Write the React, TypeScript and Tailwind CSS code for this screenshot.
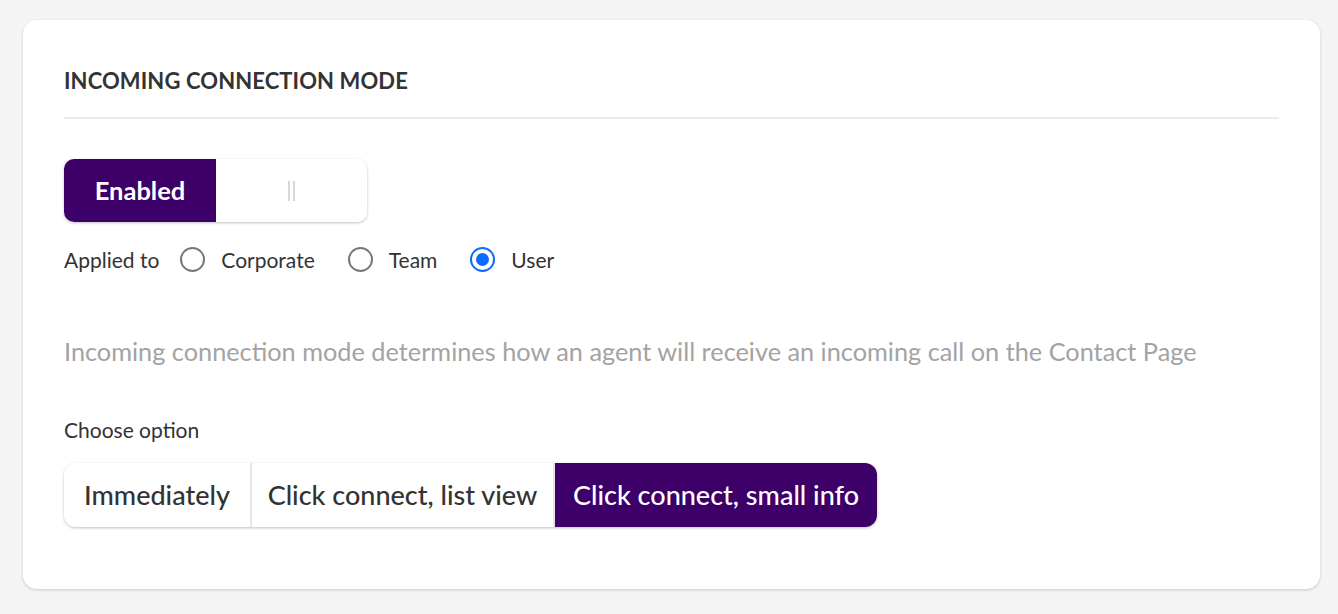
import React, { useState } from "react";

const scopes = ["Corporate", "Team", "User"];
const options = [
  { label: "Immediately", w: "w-[186px]" },
  { label: "Click connect, list view", w: "w-[303px]" },
  { label: "Click connect, small info", w: "w-[324px]" },
];

function Radio({ checked }: { checked: boolean }) {
  return (
    <span
      className={
        "w-[25px] h-[25px] rounded-full border-2 flex items-center justify-center bg-white " +
        (checked ? "border-[#0a6cff]" : "border-[#777]")
      }
    >
      {checked && <span className="w-[13px] h-[13px] rounded-full bg-[#0a6cff]" />}
    </span>
  );
}

export default function App() {
  const [scope, setScope] = useState("User");
  const [option, setOption] = useState(2);

  return (
    <div className="min-h-screen bg-[#f4f4f4] pt-[20px] pl-[23px] pr-[18px] font-['Lato',sans-serif] text-[#333]">
      <div className="bg-white rounded-[14px] shadow-[0_1px_3px_rgba(0,0,0,0.18)] px-[41px] pt-[44px] pb-[62px]">
        <h2 className="text-[22px] font-bold tracking-[0.1px] pb-[20px] border-b-2 border-[#ebebeb]">
          INCOMING CONNECTION MODE
        </h2>

        <div className="mt-[40px] flex w-[303px] h-[63px] rounded-[10px] shadow-[0_1px_3px_rgba(0,0,0,0.25)] overflow-hidden">
          <button className="w-[152px] bg-[#3d0069] text-white text-[25.5px] font-bold">Enabled</button>
          <button className="flex-1 bg-white flex items-center justify-center gap-[3px]">
            <span className="w-[2px] h-[20px] bg-[#d8d8d8]" />
            <span className="w-[2px] h-[20px] bg-[#d8d8d8]" />
          </button>
        </div>

        <div className="mt-[22px] flex items-center text-[21px]">
          <span className="mr-[21px]">Applied to</span>
          {scopes.map((s) => (
            <label
              key={s}
              className="flex items-center mr-[33px] cursor-pointer"
              onClick={() => setScope(s)}
            >
              <Radio checked={scope === s} />
              <span className="ml-[16px]">{s}</span>
            </label>
          ))}
        </div>

        <p className="mt-[57px] text-[25.3px] text-[#a3a3a3]">
          Incoming connection mode determines how an agent will receive an incoming call on the Contact Page
        </p>

        <p className="mt-[44px] text-[21px]">Choose option</p>

        <div className="mt-[17px] inline-flex h-[64px] rounded-[12px] shadow-[0_1px_3px_rgba(0,0,0,0.25)] overflow-hidden">
          {options.map((o, i) => (
            <button
              key={o.label}
              onClick={() => setOption(i)}
              className={
                o.w +
                " text-[27px] font-medium " +
                (i > 0 ? "border-l-2 border-[#e6e6e6] " : "") +
                (option === i ? "bg-[#3d0069] text-white border-[#3d0069]" : "bg-white text-[#333]")
              }
            >
              {o.label}
            </button>
          ))}
        </div>
      </div>
    </div>
  );
}
